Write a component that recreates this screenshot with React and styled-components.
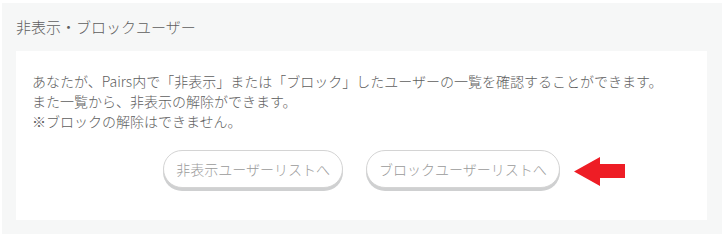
import React from 'react';
import styled, { createGlobalStyle } from 'styled-components';

const GlobalStyle = createGlobalStyle`
  body {
    margin: 0;
    background: #fff;
    font-family: "Noto Sans CJK JP", "Liberation Sans", sans-serif;
  }
`;

const Panel = styled.section`
  margin: 3px 3px 0 2px;
  padding: 0 15px 14px 14px;
  background-color: #f6f7f7;
`;

const Heading = styled.h2`
  margin: 0;
  height: 48px;
  line-height: 48px;
  font-size: 15px;
  font-weight: 300;
  color: #5e5e5e;
`;

const Card = styled.div`
  background: #fff;
  padding: 20px 16px 32px;
`;

const Text = styled.p`
  margin: 0;
  font-size: 14px;
  font-weight: 300;
  line-height: 20px;
  color: #5e5e5e;
`;

const Actions = styled.div`
  display: flex;
  justify-content: center;
  gap: 23px;
  margin-top: 19px;
`;

const ButtonWrap = styled.div`
  position: relative;
`;

const PillButton = styled.button`
  height: 38px;
  padding: 0 12px;
  border: 1px solid #d4d4d4;
  border-radius: 20px;
  background: #fff;
  box-shadow: 0 3px 0 #cfd0d1;
  font-family: inherit;
  font-size: 14px;
  font-weight: 300;
  color: #9a9a9a;
  cursor: pointer;
  white-space: nowrap;
`;

const Pointer = styled.svg`
  position: absolute;
  left: calc(100% + 14px);
  top: 7px;
`;

export default function App() {
  return (
    <>
      <GlobalStyle />
      <Panel>
        <Heading>非表示・ブロックユーザー</Heading>
        <Card>
          <Text>あなたが、Pairs内で「非表示」または「ブロック」したユーザーの一覧を確認することができます。</Text>
          <Text>また一覧から、非表示の解除ができます。</Text>
          <Text>※ブロックの解除はできません。</Text>
          <Actions>
            <PillButton>非表示ユーザーリストへ</PillButton>
            <ButtonWrap>
              <PillButton>ブロックユーザーリストへ</PillButton>
              <Pointer width="52" height="29" viewBox="0 0 52 29">
                <polygon points="0,14.5 26,0 26,7 51,7 51,21 26,21 26,29" fill="#ee1d25" />
              </Pointer>
            </ButtonWrap>
          </Actions>
        </Card>
      </Panel>
    </>
  );
}
